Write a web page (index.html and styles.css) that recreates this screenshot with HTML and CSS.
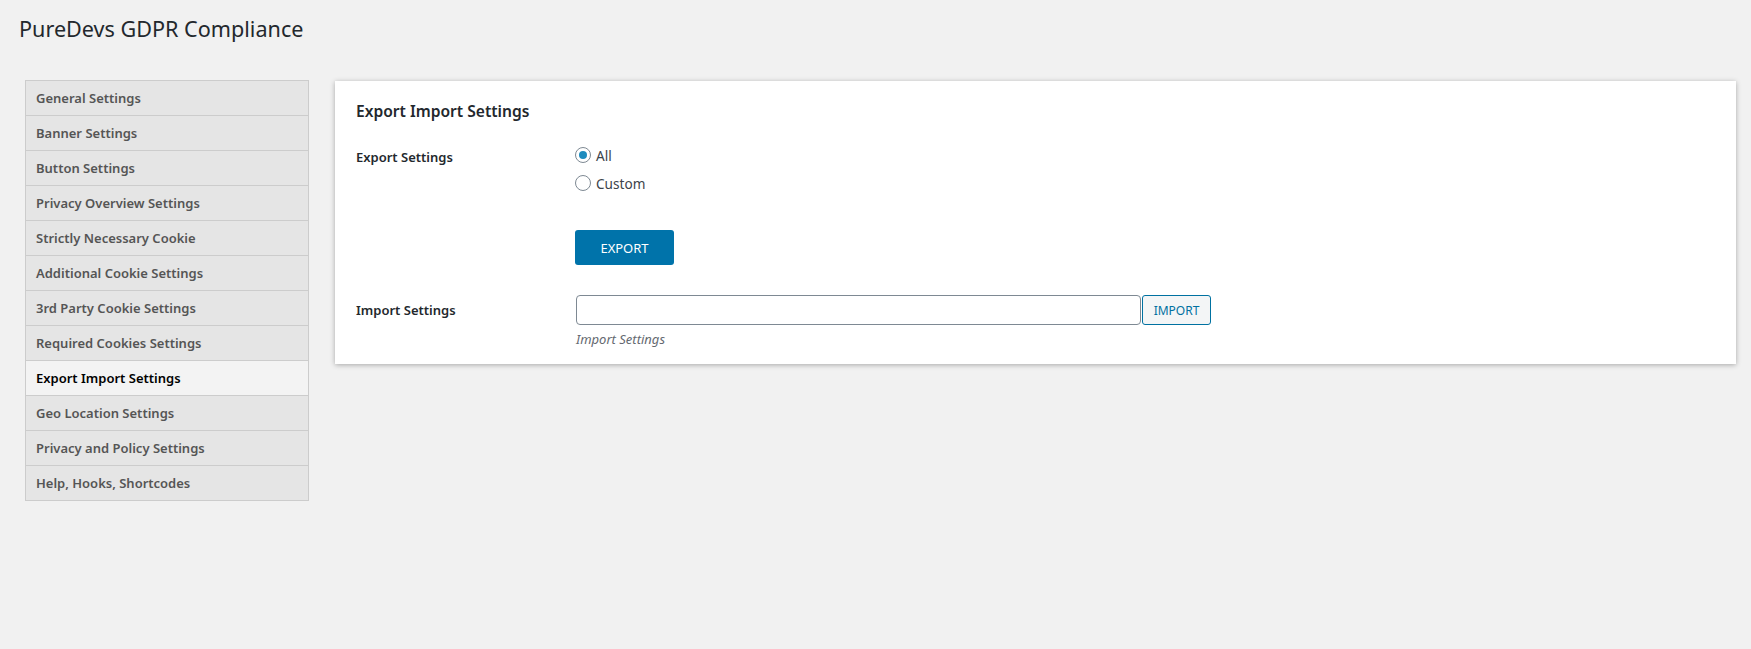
FILE: index.html
```html
<!DOCTYPE html>
<html lang="en">
<head>
<meta charset="utf-8">
<title>PureDevs GDPR Compliance</title>
<link rel="stylesheet" href="styles.css">
</head>
<body>
<div class="wrap">
  <h1 class="page-title">PureDevs GDPR Compliance</h1>
  <div class="layout">
    <ul class="side-nav">
      <li class="nav-item">General Settings</li>
      <li class="nav-item">Banner Settings</li>
      <li class="nav-item">Button Settings</li>
      <li class="nav-item">Privacy Overview Settings</li>
      <li class="nav-item">Strictly Necessary Cookie</li>
      <li class="nav-item">Additional Cookie Settings</li>
      <li class="nav-item">3rd Party Cookie Settings</li>
      <li class="nav-item">Required Cookies Settings</li>
      <li class="nav-item active">Export Import Settings</li>
      <li class="nav-item">Geo Location Settings</li>
      <li class="nav-item">Privacy and Policy Settings</li>
      <li class="nav-item">Help, Hooks, Shortcodes</li>
    </ul>
    <div class="card">
      <h2 class="card-title">Export Import Settings</h2>
      <div class="form-grid">
        <div class="field-label export-label">Export Settings</div>
        <div class="field export-field">
          <label class="radio-line"><input class="radio" type="radio" name="export" checked><span>All</span></label>
          <label class="radio-line"><input class="radio" type="radio" name="export"><span>Custom</span></label>
          <button class="btn-primary" type="button">EXPORT</button>
        </div>
        <div class="field-label import-label">Import Settings</div>
        <div class="field import-field">
          <div class="import-row">
            <input class="text-input" type="text">
            <button class="btn-secondary" type="button">IMPORT</button>
          </div>
          <p class="description">Import Settings</p>
        </div>
      </div>
    </div>
  </div>
</div>
</body>
</html>
```

FILE: styles.css
```css
html, body {
  margin: 0;
  padding: 0;
}
body {
  background: #f1f1f1;
  font-family: "Noto Sans", "Open Sans", sans-serif;
  color: #23282d;
  width: 1751px;
  height: 649px;
  overflow: hidden;
}
.wrap {
  padding: 0 15px 0 19px;
}
.page-title {
  margin: 14px 0 0 0;
  font-size: 21.6px;
  line-height: 30px;
  font-weight: 400;
  color: #23282d;
}
.layout {
  display: flex;
  align-items: flex-start;
  gap: 26px;
  margin-top: 36px;
  padding-left: 6px;
}
.side-nav {
  list-style: none;
  margin: 0;
  padding: 0;
  width: 282px;
  flex: none;
  border: 1px solid #cccccc;
  border-bottom: none;
  background: #e5e5e5;
}
.nav-item {
  height: 34px;
  line-height: 34px;
  padding-left: 10px;
  border-bottom: 1px solid #cccccc;
  font-size: 13px;
  font-weight: 600;
  color: #555555;
  white-space: nowrap;
}
.nav-item.active {
  background: #f3f3f3;
  color: #000000;
}
.card {
  flex: 1;
  margin-top: 1px;
  background: #ffffff;
  box-shadow: 0 1px 5px rgba(0, 0, 0, 0.3);
  padding: 19px 21px 16px 21px;
  box-sizing: border-box;
  height: 283px;
}
.card-title {
  margin: 0;
  font-size: 15.6px;
  line-height: 22px;
  font-weight: 600;
  color: #23282d;
}
.form-grid {
  display: grid;
  grid-template-columns: 220px 1fr;
  margin-top: 19px;
}
.field-label {
  font-size: 13px;
  font-weight: 600;
  color: #23282d;
}
.export-label {
  padding-top: 6px;
  line-height: 20px;
}
.export-field {
  display: flex;
  flex-direction: column;
  align-items: flex-start;
}
.radio-line {
  display: flex;
  align-items: center;
  gap: 5px;
  height: 28px;
  font-size: 13.6px;
  color: #3c434a;
  margin-left: -1px;
}
.radio {
  appearance: none;
  -webkit-appearance: none;
  margin: 0;
  width: 16px;
  height: 16px;
  border: 1px solid #7e8993;
  border-radius: 50%;
  background: #ffffff;
  box-sizing: border-box;
  display: grid;
  place-items: center;
}
.radio:checked::before {
  content: "";
  width: 8px;
  height: 8px;
  border-radius: 50%;
  background: #1e8cbe;
}
.btn-primary {
  margin-top: 33px;
  margin-left: -1px;
  width: 99px;
  height: 35px;
  border: none;
  border-radius: 3px;
  background: #0073aa;
  color: #ffffff;
  font-family: inherit;
  font-size: 13px;
  padding: 0;
}
.import-label {
  margin-top: 30px;
  line-height: 30px;
}
.import-field {
  margin-top: 30px;
}
.import-row {
  display: flex;
  gap: 1px;
}
.text-input {
  width: 565px;
  height: 30px;
  box-sizing: border-box;
  border: 1px solid #7e8993;
  border-radius: 4px;
  margin: 0;
  background: #ffffff;
}
.btn-secondary {
  width: 69px;
  height: 30px;
  box-sizing: border-box;
  border: 1px solid #0071a1;
  border-radius: 3px;
  background: #f3f5f6;
  color: #0071a1;
  font-family: inherit;
  font-size: 12px;
  padding: 0;
}
.description {
  margin: 5px 0 0 0;
  font-size: 13px;
  line-height: 18px;
  font-style: italic;
  color: #646970;
}
```
